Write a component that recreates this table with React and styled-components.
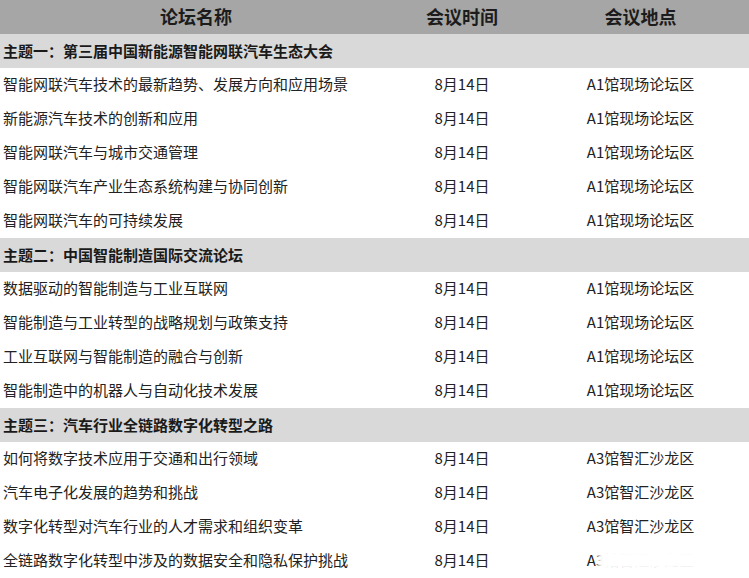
import React from "react";
import styled, { createGlobalStyle } from "styled-components";

const Global = createGlobalStyle`
  html, body { margin: 0; padding: 0; background: #fff; }
  body { font-family: "Microsoft YaHei", "Noto Sans CJK SC", "Noto Sans", sans-serif; color: #222; }
`;

const Table = styled.div`
  width: 749px;
  display: grid;
  grid-template-columns: 392px 140px 217px;
`;

const HeadCell = styled.div`
  box-sizing: border-box;
  height: 34px;
  padding-bottom: 2px;
  background: #a6a6a6;
  display: flex;
  align-items: center;
  justify-content: center;
  font-size: 18px;
  font-weight: 700;
  color: #1c1c1c;
`;

const ThemeRow = styled.div`
  box-sizing: border-box;
  grid-column: 1 / -1;
  height: 34px;
  padding-bottom: 2px;
  background: #d9d9d9;
  display: flex;
  align-items: center;
  padding-left: 3px;
  font-size: 15px;
  font-weight: 700;
  color: #1a1a1a;
`;

const Cell = styled.div`
  box-sizing: border-box;
  position: relative;
  height: 34px;
  padding-bottom: 3px;
  display: flex;
  align-items: center;
  justify-content: ${(p) => (p.$center ? "center" : "flex-start")};
  padding-left: ${(p) => (p.$center ? "0" : "3px")};
  font-size: 15px;
  color: #222;
  white-space: nowrap;
`;

const Watermark = styled.div`
  position: absolute;
  left: 66px;
  top: 6px;
  width: 110px;
  height: 20px;
  background: #fff;
  filter: blur(2px);
`;

const groups = [
  {
    title: "主题一：第三届中国新能源智能网联汽车生态大会",
    place: "A1馆现场论坛区",
    items: [
      "智能网联汽车技术的最新趋势、发展方向和应用场景",
      "新能源汽车技术的创新和应用",
      "智能网联汽车与城市交通管理",
      "智能网联汽车产业生态系统构建与协同创新",
      "智能网联汽车的可持续发展",
    ],
  },
  {
    title: "主题二：中国智能制造国际交流论坛",
    place: "A1馆现场论坛区",
    items: [
      "数据驱动的智能制造与工业互联网",
      "智能制造与工业转型的战略规划与政策支持",
      "工业互联网与智能制造的融合与创新",
      "智能制造中的机器人与自动化技术发展",
    ],
  },
  {
    title: "主题三：汽车行业全链路数字化转型之路",
    place: "A3馆智汇沙龙区",
    items: [
      "如何将数字技术应用于交通和出行领域",
      "汽车电子化发展的趋势和挑战",
      "数字化转型对汽车行业的人才需求和组织变革",
      "全链路数字化转型中涉及的数据安全和隐私保护挑战",
    ],
  },
];

export default function App() {
  return (
    <>
      <Global />
      <Table>
        <HeadCell>论坛名称</HeadCell>
        <HeadCell>会议时间</HeadCell>
        <HeadCell>会议地点</HeadCell>
        {groups.map((g, gi) => (
          <React.Fragment key={gi}>
            <ThemeRow>{g.title}</ThemeRow>
            {g.items.map((it, i) => {
              const last = gi === groups.length - 1 && i === g.items.length - 1;
              return (
                <React.Fragment key={i}>
                  <Cell>{it}</Cell>
                  <Cell $center>8月14日</Cell>
                  <Cell $center>
                    {g.place}
                    {last && <Watermark />}
                  </Cell>
                </React.Fragment>
              );
            })}
          </React.Fragment>
        ))}
      </Table>
    </>
  );
}
